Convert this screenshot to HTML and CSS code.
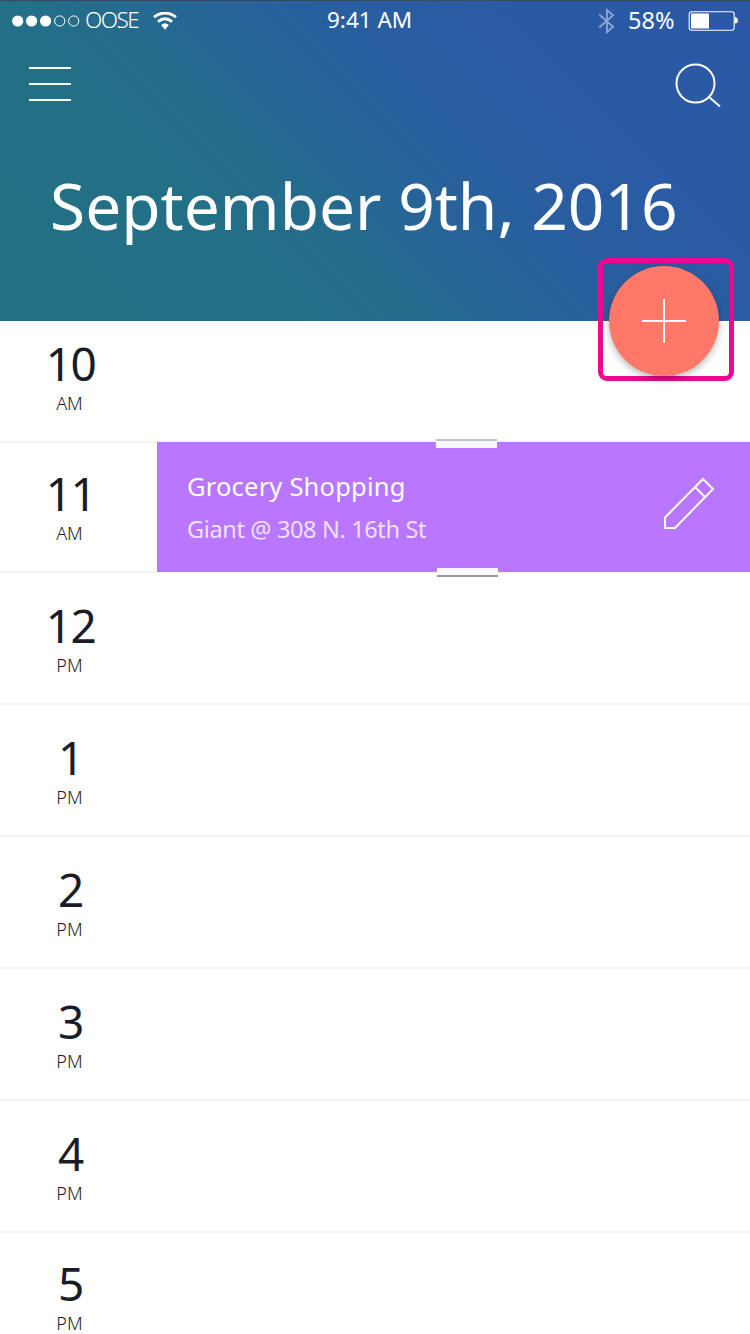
FILE: index.html
```html
<!DOCTYPE html>
<html lang="en">
<head>
<meta charset="utf-8">
<title>Schedule</title>
<link rel="stylesheet" href="styles.css">
</head>
<body>
<header class="header">
  <div class="status">
    <div class="status-left">
      <svg class="signal" width="68" height="12" viewBox="0 0 68 12">
        <g fill="#fff"><circle cx="5.7" cy="6" r="5.6"/><circle cx="19.6" cy="6" r="5.6"/><circle cx="33.6" cy="6" r="5.6"/></g>
        <g fill="none" stroke="#fff" stroke-width="1"><circle cx="47.7" cy="6" r="5.1"/><circle cx="61.7" cy="6" r="5.1"/></g>
      </svg>
      <span class="carrier">OOSE</span>
      <svg class="wifi" width="24" height="18" viewBox="0 0 24 18">
        <g fill="none" stroke="#fff" stroke-width="2.9"><path d="M1 5.1Q12-3.1 23 5.1"/><path d="M4.9 9.6Q12 3.8 19.1 9.6"/></g>
        <path d="M8.2 13Q12 9.6 15.8 13L12 17.8z" fill="#fff"/>
      </svg>
    </div>
    <span class="clock">9:41 AM</span>
    <div class="status-right">
      <svg class="bluetooth" width="18" height="26" viewBox="0 0 18 26"><path d="M1.2 6.500 15 18.800 9 24V2l6 5.200L1.200 19.500" fill="none" stroke="#fff" stroke-width="1.900"/></svg>
      <span class="percent">58%</span>
      <svg class="battery" width="50" height="20" viewBox="0 0 50 20"><rect x="1.200" y=".7" width="45" height="18.600" rx="2.500" fill="none" stroke="#fff" stroke-width="1.100"/><path d="M3 2.500h18v15H3zM47 6q3 1 3 3.500t-3 3z" fill="#fff"/></svg>
    </div>
  </div>
  <div class="toolbar">
    <svg class="menu" width="42" height="34" viewBox="0 0 42 34"><path d="M0 1h42M0 17h42M0 33h42" stroke="#fff" stroke-width="2"/></svg>
    <svg class="search" width="46" height="46" viewBox="0 0 46 46" fill="none" stroke="#fff" stroke-width="2"><circle cx="20.500" cy="20.500" r="19"/><path d="M34 34 45 43.500"/></svg>
  </div>
  <h1 class="title">September 9th, 2016</h1>
  <div class="highlight">
    <button class="add" aria-label="Add event"><svg width="44" height="44" viewBox="0 0 44 44"><path d="M22 0v44M0 22h44" stroke="#fff" stroke-width="2"/></svg></button>
  </div>
</header>
<main class="hours">
  <section class="row row-first"><div class="time"><span class="hour">10</span><span class="half">AM</span></div></section>
  <section class="row row-short"><div class="time"><span class="hour">11</span><span class="half">AM</span></div>
    <article class="event">
      <div class="event-text"><span class="event-name">Grocery Shopping</span><span class="event-place">Giant @ 308 N. 16th St</span></div>
      <svg class="edit" width="52" height="53" viewBox="0 0 52 53" fill="none" stroke="#fff" stroke-width="2"><path d="M2 51V40.500L40 2 50 12 12 51zM32 10 42 20"/></svg>
      <i class="handle handle-top"></i><i class="handle handle-bottom"></i>
    </article>
  </section>
  <section class="row"><div class="time"><span class="hour">12</span><span class="half">PM</span></div></section>
  <section class="row"><div class="time"><span class="hour">1</span><span class="half">PM</span></div></section>
  <section class="row"><div class="time"><span class="hour">2</span><span class="half">PM</span></div></section>
  <section class="row"><div class="time"><span class="hour">3</span><span class="half">PM</span></div></section>
  <section class="row"><div class="time"><span class="hour">4</span><span class="half">PM</span></div></section>
  <section class="row row-short"><div class="time"><span class="hour">5</span><span class="half">PM</span></div></section>
</main>
</body>
</html>
```
FILE: styles.css
```css
* { box-sizing: border-box; }
html, body { height: 1334px; overflow: hidden; }
body { margin: 0; background: #fff; color: #1b1c27; font-family: "Noto Sans", "Open Sans", sans-serif; }
svg { display: block; flex: none; }
.header { position: relative; height: 321px; color: #fff; border-top: 1px solid #394960; background: linear-gradient(45deg, #237084 0%, #237086 28%, #246b8d 40%, #27629a 52%, #295da1 64%, #2a5aa5 78%, #2a58a7 100%); }
.status { display: grid; grid-template-columns: 315px auto 1fr; height: 40px; padding: 0 12px; font-size: 22.500px; line-height: 38px; white-space: nowrap; }
.status-left, .status-right { display: flex; align-items: center; }
.status-right { justify-content: flex-end; }
.carrier { margin-left: 5px; width: 56px; padding-bottom: 2px; letter-spacing: -1.500px; font-weight: 300; }
.wifi { margin-left: 12px; }
.bluetooth { opacity: .45; margin-right: 12px; }
.percent { width: 49px; padding-bottom: 2px; margin-right: 11px; font-size: 23.500px; }
.toolbar { display: flex; justify-content: space-between; padding: 22px 29px 0; height: 108px; }
.menu { margin-top: 4px; }
.title { margin: 0; padding-left: 50px; font-size: 64px; font-weight: 400; line-height: 114px; white-space: nowrap; }
.highlight { position: absolute; z-index: 2; left: 598px; top: 257px; width: 136px; height: 123px; padding: 3px 6px; border: 5px solid #f0078f; border-radius: 9px; }
.add { display: block; width: 110px; height: 110px; padding: 32px 33px; border: 0; border-radius: 50%; background: #ff7868; box-shadow: 0 3px 7px rgba(0,0,0,.28); }
.row { display: flex; align-items: flex-end; height: 132px; border-bottom: 2px solid #f2f2f3; }
.row-first { height: 122px; }
.row-short { height: 130px; }
.time { display: flex; flex-direction: column; align-items: center; width: 139px; flex: none; margin-right: 18px; padding-bottom: 24px; }
.hour { padding-left: 2px; font-size: 46px; line-height: 52px; letter-spacing: -1.500px; }
.half { font-size: 18px; line-height: 28px; font-weight: 300; }
.event { position: relative; display: flex; flex: 1; justify-content: space-between; height: 130px; margin-bottom: -1px; padding: 23px 35px 0 30px; background: #b976ff; color: #fff; }
.event-text { display: flex; flex-direction: column; white-space: nowrap; line-height: 43px; }
.event-name { font-size: 25.500px; letter-spacing: .2px; }
.event-place { font-size: 23.500px; letter-spacing: -.35px; color: #f0e0ff; }
.edit { margin-top: 12px; }
.handle { position: absolute; width: 61px; height: 9px; background: #f8f7fa; }
.handle-top { left: 279px; top: -3px; border-top: 2px solid #c3c3c3; }
.handle-bottom { left: 280px; bottom: -5px; border-bottom: 2px solid #999; }
```
